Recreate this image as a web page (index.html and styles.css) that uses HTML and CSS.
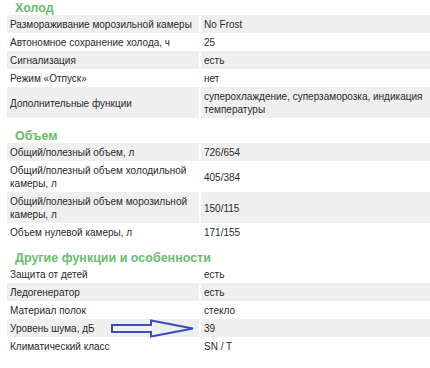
FILE: index.html
```html
<!DOCTYPE html>
<html lang="ru">
<head>
<meta charset="utf-8">
<link rel="stylesheet" href="styles.css">
</head>
<body>
<div class="page">
  <section class="sec">
    <h2 class="title">Холод</h2>
    <div class="row alt"><div class="k">Размораживание морозильной камеры</div><div class="v">No Frost</div></div>
    <div class="row"><div class="k">Автономное сохранение холода, ч</div><div class="v">25</div></div>
    <div class="row alt"><div class="k">Сигнализация</div><div class="v">есть</div></div>
    <div class="row"><div class="k">Режим «Отпуск»</div><div class="v">нет</div></div>
    <div class="row alt"><div class="k">Дополнительные функции</div><div class="v">суперохлаждение, суперзаморозка, индикация температуры</div></div>
  </section>
  <section class="sec sec2">
    <h2 class="title">Объем</h2>
    <div class="row alt"><div class="k">Общий/полезный объем, л</div><div class="v">726/654</div></div>
    <div class="row"><div class="k">Общий/полезный объем холодильной камеры, л</div><div class="v">405/384</div></div>
    <div class="row alt"><div class="k">Общий/полезный объем морозильной камеры, л</div><div class="v">150/115</div></div>
    <div class="row"><div class="k">Объем нулевой камеры, л</div><div class="v">171/155</div></div>
  </section>
  <section class="sec sec3">
    <h2 class="title">Другие функции и особенности</h2>
    <div class="row"><div class="k">Защита от детей</div><div class="v">есть</div></div>
    <div class="row alt"><div class="k">Ледогенератор</div><div class="v">есть</div></div>
    <div class="row"><div class="k">Материал полок</div><div class="v">стекло</div></div>
    <div class="row alt marked"><div class="k">Уровень шума, дБ</div><div class="v">39</div>
      <svg class="arrow" viewBox="0 0 84 19" width="84" height="19" aria-hidden="true">
        <polygon points="1,6 40,6 40,1.5 82,9.5 40,17.5 40,13 1,13" fill="none" stroke="#3b4cc0" stroke-width="2" stroke-linejoin="miter"/>
      </svg>
    </div>
    <div class="row"><div class="k">Климатический класс</div><div class="v">SN / T</div></div>
  </section>
</div>
</body>
</html>
```

FILE: styles.css
```css
html, body {
  margin: 0;
  padding: 0;
  background: #ffffff;
  overflow: hidden;
}
.page {
  width: 424px;
  padding-left: 7px;
  font-family: "Liberation Sans", Arial, sans-serif;
  font-size: 10px;
  color: #2a2a2a;
}
.sec2 { margin-top: 10px; }
.sec3 { margin-top: 9px; }
.title {
  margin: 0;
  padding: 1px 0 0 8px;
  height: 14px;
  line-height: 14px;
  font-size: 12.5px;
  font-weight: bold;
  color: #69bd6b;
}
.row {
  position: relative;
  display: grid;
  grid-template-columns: 192px 1fr;
  column-gap: 2px;
}
.k, .v {
  display: flex;
  align-items: center;
  padding: 3px 3px 2px 3px;
  line-height: 13px;
}
.alt .k, .alt .v { background: #efefef; }
.arrow {
  position: absolute;
  left: 104px;
  top: 0;
}
```
